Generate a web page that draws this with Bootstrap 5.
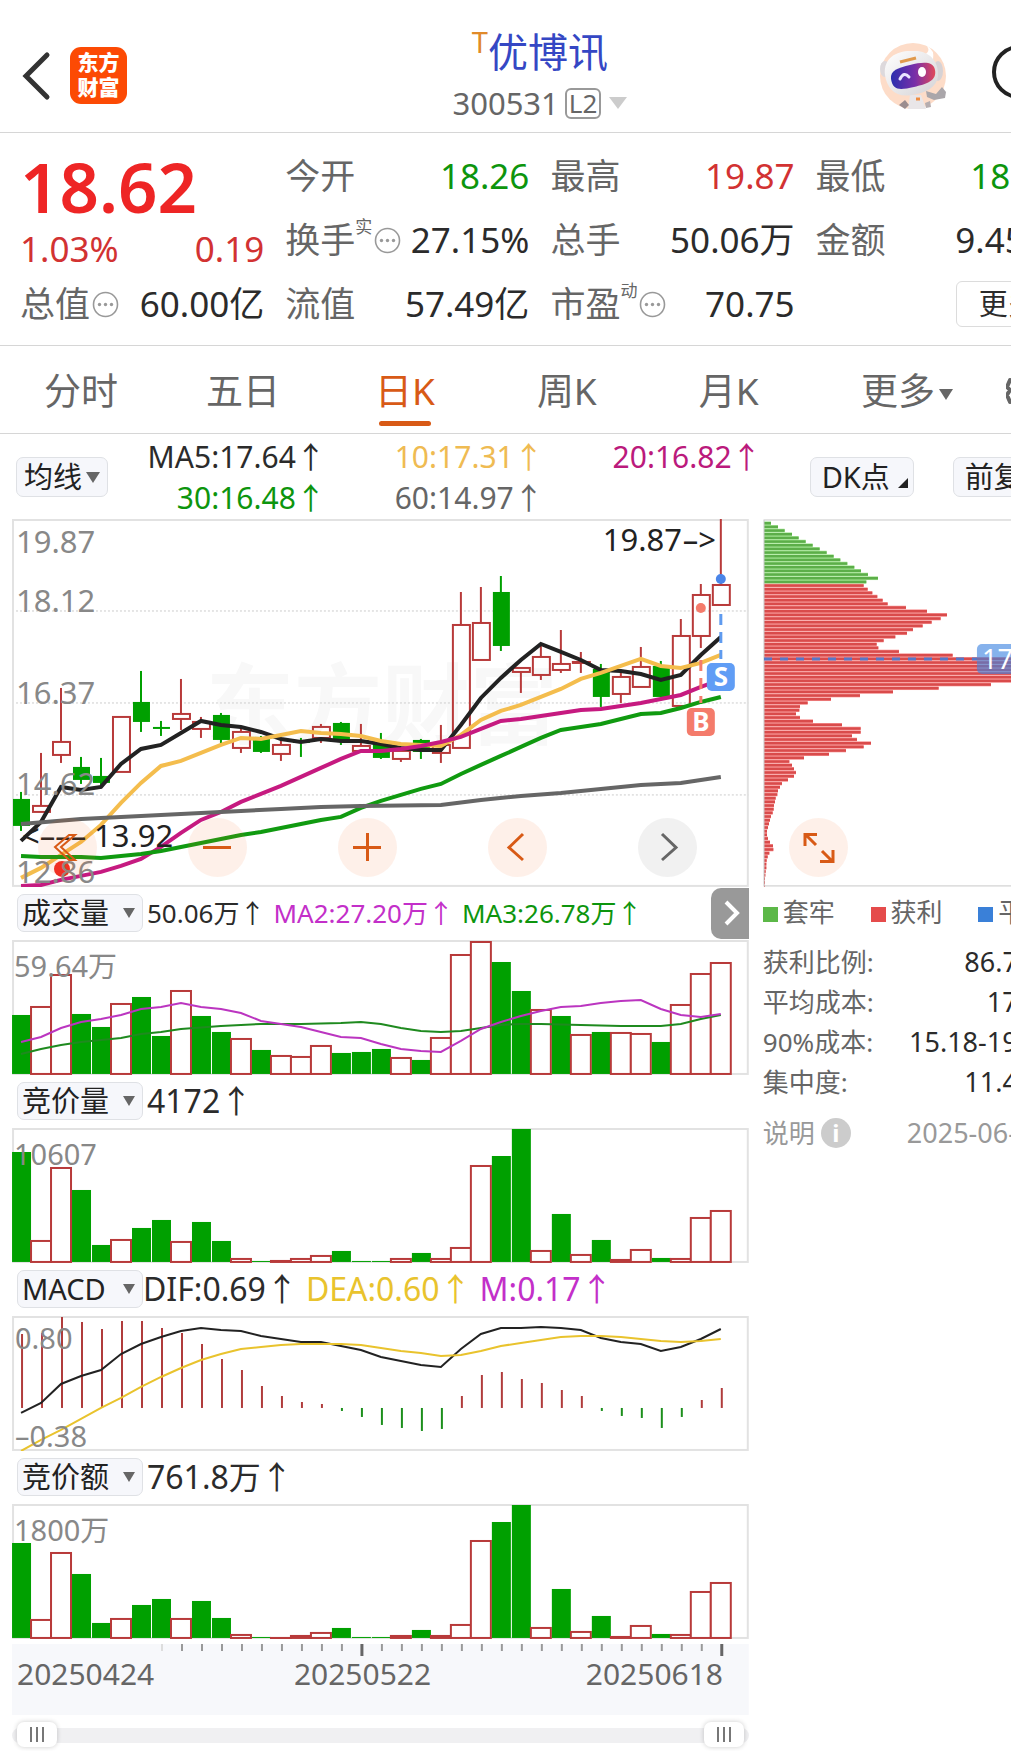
<!DOCTYPE html>
<html lang="zh-CN">
<head>
<meta charset="utf-8">
<meta name="viewport" content="width=device-width, initial-scale=1">
<title>优博讯 300531</title>
<link href="https://cdn.jsdelivr.net/npm/bootstrap@5.3.0/dist/css/bootstrap.min.css" rel="stylesheet">
<style>
body{font-family:"Noto Sans","Noto Sans CJK SC",sans-serif;color:#2b2b2b;background:#fff}
.stock-app{width:calc(107% - 2px)}
.c-red{color:#d23232}.c-green{color:#0d950d}.c-gray{color:#666}
.c-gold{color:#efbb52}.c-mag{color:#bb1a7c}.c-dea{color:#e9c32d}.c-vio{color:#c32fc9}
.line-b{border-bottom:1px solid #d6d6d6}
svg{display:block}
svg text{font-family:"Noto Sans","Noto Sans CJK SC",sans-serif}
/* header */
.top-head{height:133px;padding:0 22px}
.side{flex:1 1 0;height:133px;padding-top:18px}
.robot{margin-right:42px}
.em-logo{width:57px;height:57px;border-radius:11px;background:#fc4a04;color:#fff;font-weight:900;font-size:21px;line-height:25px;padding-top:3px}
.stock-name{font-size:40px;line-height:50px;color:#3547c4;margin:27px 0 5px}
.stock-name sup{font-size:29px;color:#e08a2a;top:-14px;line-height:0}
.stock-code{font-size:31px;line-height:42px;color:#666}
.lv2{border:2px solid #999;border-radius:6px;font-size:26px;line-height:27px;padding:0 2px;margin-left:6px}
.tri{display:inline-block;border:9px solid transparent;border-top:12px solid #ccc;border-bottom:0}
/* quote */
.quote{padding:11px 20px 9px;display:grid;grid-template-columns:repeat(4,1fr);column-gap:21px;font-size:35px}
.q-line{height:64px;display:flex;align-items:center;white-space:nowrap}
.q-line.mid{height:46px}
.q-line>:last-child{margin-left:auto}
.q-line sup{font-size:17px;top:-20px;line-height:0;margin-right:2px}
.big-price{font-size:69px;font-weight:600;line-height:84px;height:82px;color:#ee2525}
.more-btn{font-size:29px;line-height:44px;padding:0 22px;border:1px solid #dcdcdc;border-radius:6px;background:#fff;color:#2b2b2b}
/* period tabs */
.period a{flex:0 0 15%;height:87px;line-height:90px;font-size:37px;color:#666;text-align:center;text-decoration:none;position:relative;white-space:nowrap}
.period a.active{color:#d85a16}
.period a.active::after{content:"";position:absolute;left:50%;margin-left:-26px;bottom:7px;width:52px;height:5px;border-radius:3px;background:#d85a16}
.period a.wide{flex-basis:18%}
.gear-btn{border:0;background:none;padding:0 0 0 2px}
.period .tri,.ma-row .tri{border-width:7px;border-top:11px solid #666;border-bottom:0;vertical-align:5px}
/* MA row */
.ma-row{height:85px;padding:0 16px;white-space:nowrap}
.chip-btn{height:40px;border:1px solid #dfe1e5;border-radius:7px;background:#f6f7fb;font-size:29px;line-height:36px;color:#222;padding:0 7px}
.chip-btn.roomy{padding:0 11px}
.gap-r{margin-right:39px}
.ma-grid{display:grid;grid-template-columns:repeat(3,1fr);text-align:right;font-size:30px;line-height:41px}
.corner{display:inline-block;border-left:10px solid transparent;border-bottom:10px solid #222;margin-left:8px;margin-right:-6px}
/* charts */
.chart-area{display:grid;grid-template-columns:737fr 317fr;column-gap:14px;padding-left:12px}
.chart-area svg{width:100%;height:auto}
.tools{position:absolute;left:26px;bottom:10px;display:flex;gap:91px}
.tool{width:59px;height:59px;border:0;border-radius:50%;background:rgba(250,110,40,.1);padding:0}
.tool.off{background:rgba(80,80,80,.08)}
.chart-area .tool svg{width:59px;height:59px}
.ind-row{height:53px;padding-left:5px;font-size:32px;line-height:40px;white-space:nowrap}
.ind-row.tight{font-size:26px}
.pick{position:relative;width:126px;flex:none}
.pick select{appearance:none;width:100%;height:38px;border:1px solid #dfe1e5;border-radius:7px;background:#f6f7fb;font-size:29px;line-height:36px;padding:0 4px;color:#222;display:block}
.pick::after{content:"";position:absolute;right:8px;top:14px;border:6px solid transparent;border-top:10px solid #666;border-bottom:0}
.slide-btn{height:51px;width:38px;border:0;border-radius:10px 0 0 10px;background:#999;padding:0}
.chart-area .slide-btn svg{width:38px;height:51px}
.zoom-bar{position:relative;height:25px;margin-top:7px;margin-bottom:5px}
.zoom-bar::before{content:"";position:absolute;left:0;right:0;top:6px;height:15px;border-radius:8px;background:#f0f0f2}
.zoom-bar input{position:absolute;left:5px;right:5px;top:0;width:calc(100% - 10px);height:25px;appearance:none;background:none;pointer-events:none;margin:0}
.zoom-bar input::-webkit-slider-thumb{appearance:none;pointer-events:auto;width:40px;height:25px;border:0;border-radius:7px;box-shadow:0 0 5px rgba(0,0,0,.2);background:linear-gradient(90deg,transparent 13px,#777 13px 15px,transparent 15px 19px,#777 19px 21px,transparent 21px 25px,#777 25px 27px,transparent 27px) center/40px 15px no-repeat,#fff}
/* cost panel */
.legend-row{height:52px;font-size:26px;color:#666}
.legend-row i{width:15px;height:15px;display:inline-block;margin-right:5px}
.legend-row span{width:34%;flex:none;white-space:nowrap}
.cost{font-size:26px;line-height:40px;margin:3px 0 0;padding-right:24px;white-space:nowrap}
.cost dt{font-weight:400;color:#666}.cost dd{margin:0;font-size:27px}
.note{font-size:26px;line-height:40px;color:#999;margin-top:11px;padding-right:32px}
.note .ms-auto{font-size:27px}
.info-dot{width:30px;height:30px;border-radius:50%;background:#ccc;color:#fff;font-weight:700;line-height:30px;font-size:24px;text-align:center;margin-left:6px;border:0;padding:0}
</style>
</head>
<body>
<div class="overflow-hidden">
<div class="stock-app">
<header class="top-head line-b d-flex">
  <div class="side d-flex align-items-center">
    <a href="#" aria-label="返回" class="me-3"><svg width="32" height="50" viewBox="0 0 32 50"><path d="M25 4 4 25 25 46" fill="none" stroke="#333" stroke-width="5" stroke-linecap="round"/></svg></a>
    <div class="em-logo text-center">东方<br>财富</div>
  </div>
  <div class="text-center">
    <h1 class="stock-name fw-normal"><sup>T</sup>优博讯</h1>
    <div class="stock-code d-flex align-items-center justify-content-center"><span>300531</span><span class="lv2">L2</span><span class="tri ms-2"></span></div>
  </div>
  <div class="side d-flex align-items-center justify-content-end">
    <svg width="72" height="70" viewBox="0 0 72 70" class="robot">
      <defs><linearGradient id="visor"><stop offset="0" stop-color="#2b2fae"/><stop offset=".55" stop-color="#7a2fa8"/><stop offset="1" stop-color="#e0485a"/></linearGradient>
      <linearGradient id="shell" x1="0" y1="0" x2="1" y2="1"><stop offset="0" stop-color="#fff"/><stop offset="1" stop-color="#d5d3d6"/></linearGradient></defs>
      <circle cx="35" cy="35" r="33" fill="#fddcc8"/>
      <path d="M32 54h11l5 14H30Z" fill="#e9e6e8"/>
      <path d="M48 50 58 53 64 46 68 51 67 57 56 59 49 56Z" fill="#aaa6aa"/>
      <path d="M21 64 27 59 31 64 27 68Z" fill="#9b8d8f"/><path d="M47 62 52 60 53 66 48 67Z" fill="#b5adaf"/>
      <ellipse cx="7" cy="28" rx="5" ry="8" fill="#ddd9dc"/><ellipse cx="60" cy="30" rx="5" ry="10" fill="#d6d2d5"/>
      <path d="M46 14Q53 11 49 5 57 9 55 19Z" fill="#fff"/>
      <path d="M7 34C5 16 20 9 35 10 51 9 61 20 60 35 59 46 48 52 34 54 18 57 9 48 7 34Z" fill="url(#shell)"/>
      <path d="M13 38C12 29 20 27 32 24 45 21 55 20 57 29 59 40 48 43 36 46 22 49 15 50 13 38Z" fill="url(#visor)"/>
      <path d="M22 38q4-8 9-2" fill="none" stroke="#e9e5ff" stroke-width="3" stroke-linecap="round"/><ellipse cx="44" cy="31" rx="4" ry="5" fill="#fff"/>
      <path d="M22 21 38 17" stroke="#e09a4d" stroke-width="3"/><path d="M38 58h4" stroke="#ee8d42" stroke-width="3"/>
    </svg>
    <a href="#" aria-label="搜索"><svg width="66" height="66" viewBox="0 0 66 66"><circle cx="27" cy="29" r="25" fill="none" stroke="#222" stroke-width="4"/><path d="M45 47 59 61" stroke="#222" stroke-width="4"/></svg></a>
  </div>
</header>

<section class="quote line-b">
  <div>
    <div class="big-price">18.62</div>
    <div class="q-line mid c-red"><span>1.03%</span><span>0.19</span></div>
    <div class="q-line"><span class="c-gray">总值</span><svg width="29" height="27" viewBox="-2 0 29 27"><use href="#dots"/></svg><span>60.00亿</span></div>
  </div>
  <div>
    <div class="q-line"><span class="c-gray">今开</span><span class="c-green">18.26</span></div>
    <div class="q-line"><span class="c-gray">换手<sup>实</sup></span><svg width="27" height="27" viewBox="0 0 27 27"><use href="#dots"/></svg><span>27.15%</span></div>
    <div class="q-line"><span class="c-gray">流值</span><span>57.49亿</span></div>
  </div>
  <div>
    <div class="q-line"><span class="c-gray">最高</span><span class="c-red">19.87</span></div>
    <div class="q-line"><span class="c-gray">总手</span><span>50.06万</span></div>
    <div class="q-line"><span class="c-gray">市盈<sup>动</sup></span><svg width="27" height="27" viewBox="0 0 27 27"><use href="#dots"/></svg><span>70.75</span></div>
  </div>
  <div>
    <div class="q-line"><span class="c-gray">最低</span><span class="c-green">18.08</span></div>
    <div class="q-line"><span class="c-gray">金额</span><span>9.45亿</span></div>
    <div class="q-line"><button class="more-btn" type="button">更多</button></div>
  </div>
</section>
<svg width="0" height="0" class="position-absolute"><defs><g id="dots"><circle cx="13.500" cy="13.500" r="12" fill="none" stroke="#999" stroke-width="1.600"/><circle cx="7.500" cy="13.500" r="1.700" fill="#999"/><circle cx="13.500" cy="13.500" r="1.700" fill="#999"/><circle cx="19.500" cy="13.500" r="1.700" fill="#999"/></g></defs></svg>

<nav class="period line-b d-flex">
  <a href="#">分时</a><a href="#">五日</a><a href="#" class="active">日K</a><a href="#">周K</a><a href="#">月K</a><a href="#" class="wide">更多<span class="tri ms-1"></span></a>
  <button class="gear-btn" type="button" aria-label="设置"><svg width="40" height="40" viewBox="0 0 40 40" fill="none" stroke="#666" stroke-width="4" stroke-linejoin="round"><path d="M16 3h8l2 5 5 3 5-1 3 7-3 3 3 5-3 7-5-1-5 3-2 4h-8l-3-4-4-3-5 1-3-7 3-5-3-3 3-7 5 1 4-3Z"/><circle cx="20" cy="20" r="6"/></svg></button>
</nav>

<div class="ma-row d-flex align-items-center">
  <button class="chip-btn" type="button">均线<span class="tri ms-1"></span></button>
  <div class="ma-grid flex-grow-1">
    <span>MA5:17.64↑</span><span class="c-gold">10:17.31↑</span><span class="c-mag">20:16.82↑</span>
    <span class="c-green">30:16.48↑</span><span class="c-gray">60:14.97↑</span>
  </div>
  <button class="chip-btn roomy ms-5 gap-r" type="button">DK点<span class="corner"></span></button>
  <button class="chip-btn roomy" type="button">前复权</button>
</div>

<main class="chart-area">
  <div>
    <div class="position-relative">
      <svg id="kline" viewBox="0 0 737 368" role="img" aria-label="日K线"></svg>
      <div class="tools">
        <button class="tool" type="button" aria-label="最早"><svg viewBox="0 0 59 59" fill="none" stroke="#d85a16" stroke-width="2"><path d="M31 17 17 29 31 42H37L23 29 37 17Z"/></svg></button>
        <button class="tool" type="button" aria-label="缩小"><svg viewBox="0 0 59 59" stroke="#d85a16" stroke-width="3"><path d="M15 29.500H43"/></svg></button>
        <button class="tool" type="button" aria-label="放大"><svg viewBox="0 0 59 59" stroke="#d85a16" stroke-width="3"><path d="M15 29.500H43M29.500 15V43"/></svg></button>
        <button class="tool" type="button" aria-label="左移"><svg viewBox="0 0 59 59" fill="none" stroke="#d85a16" stroke-width="3"><path d="M35 16 21 29.500 35 42"/></svg></button>
        <button class="tool off" type="button" aria-label="右移"><svg viewBox="0 0 59 59" fill="none" stroke="#666" stroke-width="3"><path d="M24 16 38 29.500 24 42"/></svg></button>
      </div>
    </div>
    <div class="ind-row tight d-flex align-items-center">
      <div class="pick"><select aria-label="指标一"><option>成交量</option></select></div>
      <span class="ms-1">50.06万↑</span><span class="ms-2 c-vio">MA2:27.20万↑</span><span class="ms-2 c-green">MA3:26.78万↑</span>
      <button class="slide-btn ms-auto" type="button" aria-label="展开"><svg viewBox="0 0 38 51"><path d="M15 14 26 25 15 36" fill="none" stroke="#fff" stroke-width="4"/></svg></button>
    </div>
    <svg id="vol" viewBox="0 0 737 135" role="img" aria-label="成交量"></svg>
    <div class="ind-row d-flex align-items-center">
      <div class="pick"><select aria-label="指标二"><option>竞价量</option></select></div><span class="ms-1">4172↑</span>
    </div>
    <svg id="auc" viewBox="0 0 737 135" role="img" aria-label="竞价量"></svg>
    <div class="ind-row d-flex align-items-center">
      <div class="pick"><select aria-label="指标三"><option>MACD</option></select></div><span>DIF:0.69↑</span><span class="ms-2 c-dea">DEA:0.60↑</span><span class="ms-2 c-vio">M:0.17↑</span>
    </div>
    <svg id="macd" viewBox="0 0 737 135" role="img" aria-label="MACD"></svg>
    <div class="ind-row d-flex align-items-center">
      <div class="pick"><select aria-label="指标四"><option>竞价额</option></select></div><span class="ms-1">761.8万↑</span>
    </div>
    <svg id="amt" viewBox="0 0 737 135" role="img" aria-label="竞价额"></svg>
    <svg id="axis" viewBox="0 0 737 76" role="img" aria-label="日期"></svg>
    <div class="zoom-bar"><input type="range" aria-label="区间起点" min="0" max="100" value="0"><input type="range" aria-label="区间终点" min="0" max="100" value="100"></div>
  </div>
  <aside>
    <div class="position-relative">
      <svg id="chips" viewBox="0 0 317 368" role="img" aria-label="筹码分布"></svg>
      <div class="tools"><button class="tool" type="button" aria-label="全屏"><svg viewBox="0 0 59 59" fill="none" stroke="#d85a16" stroke-width="3"><path d="M16 28V16.500H28M17 17 27 27M44 32V43.500H31M33 33 43 43"/></svg></button></div>
    </div>
    <div class="legend-row d-flex align-items-center"><span><i style="background:#5cb848"></i>套牢</span><span><i style="background:#e54b4b"></i>获利</span><span><i style="background:#3a80d8"></i>平均成本</span></div>
    <dl class="cost">
      <div class="d-flex justify-content-between"><dt>获利比例:</dt><dd>86.73%</dd></div>
      <div class="d-flex justify-content-between"><dt>平均成本:</dt><dd>17.22</dd></div>
      <div class="d-flex justify-content-between"><dt>90%成本:</dt><dd>15.18-19.08</dd></div>
      <div class="d-flex justify-content-between"><dt>集中度:</dt><dd>11.40%</dd></div>
    </dl>
    <div class="note d-flex align-items-center"><span>说明</span><button class="info-dot" type="button">i</button><span class="ms-auto">2025-06-18</span></div>
  </aside>
</main>
</div>
</div>
<script src="https://cdn.jsdelivr.net/npm/bootstrap@5.3.0/dist/js/bootstrap.bundle.min.js"></script>
<script>
const RED='#b83a3a',GREEN='#00a000',X=i=>9+20*i;
const rect=(x,y,w,h,a)=>`<rect x="${x}" y="${y}" width="${w}" height="${h}" ${a}/>`;
const seg=(x1,y1,x2,y2,c,w,m='')=>`<path d="M${x1} ${y1}L${x2} ${y2}" stroke="${c}" stroke-width="${w}" ${m}/>`;
const txt=(x,y,s,a='fill="#888" font-size="31"')=>`<text x="${x}" y="${y}" ${a}>${s}</text>`;
const poly=(p,o,c,w)=>`<polyline fill="none" stroke="${c}" stroke-width="${w}" points="${p.map((v,i)=>Array.isArray(v)?X(v[0])+','+(v[1]-o):X(i)+','+(v-o)).join(' ')}"/>`;
const frame=h=>rect(1,1,735,h-2,'fill="none" stroke="#e2e2e2" stroke-width="2"');
const put=(id,s)=>document.getElementById(id).innerHTML=s;
const dirs='GRRGGRGGRRGRGRGRGRGRGRRRGRRRRGRRGRRR';
// [high, body top, body bottom, low]
const K=[[792,799,826,831],[753,806,812,812],[688,742,755,763],[757,767,780,784],[758,776,783,788],[717,717,772,772],[671,702,722,732],[721,727,728,736],[679,714,719,730],[717,722,729,738],[713,715,740,744],[727,732,748,753],[736,737,752,753],[740,745,754,761],[738,741,742,757],[724,727,738,743],[722,723,742,745],[724,746,751,751],[733,743,758,759],[748,751,759,762],[739,740,752,759],[725,745,753,763],[592,625,748,748],[587,623,660,660],[576,592,646,651],[668,668,672,693],[644,657,675,680],[630,664,670,673],[652,662,663,673],[664,669,697,707],[672,677,694,703],[647,667,687,687],[661,666,697,697],[619,636,706,706],[584,595,636,648],[519,585,605,605]];
let s=txt(194,218,'东方财富','fill="#f8f8f8" font-size="88" font-weight="700"');
[92,184,276].forEach(y=>s+=seg(0,y,737,y,'#ccc',1,'stroke-dasharray="2 2"'));
s+=frame(368);
K.forEach((k,i)=>{const[h,a,b,l]=k.map(v=>v-519),x=X(i);
  if(dirs[i]==='G')s+=seg(x,h,x,l,GREEN,2)+rect(x-8,a,17,Math.max(b-a,2),`fill="${GREEN}"`);
  else s+=seg(x,h,x,a,RED,2)+seg(x,b,x,l,RED,2)+rect(x-8,a,17,b-a,`fill="none" stroke="${RED}" stroke-width="2"`);});
s+=`<circle cx="50" cy="350" r="8" fill="#f02a22"/>`;
s+=poly([841,822,787,790,787,764,749,745,733,721,725,727,732,739,742,739,741,741,744,748,750,750,725,698,678,660,644,652,660,670,671,674,680,675,655,637],519,'#222',4);
s+=poly([878,868,855,842,825,803,783,766,761,753,745,738,739,735,731,733,734,736,741,744,745,746,735,720,711,705,697,689,679,673,666,659,666,668,663,655],519,'#f4bd4d',4);
s+=poly([886,885,880,876,872,866,859,847,833,820,812,802,794,786,777,768,759,751,751,749,746,742,737,729,721,719,716,713,710,709,706,703,699,695,687,680],519,'#c61a80',4);
s+=poly([856,857,857,857,858,856,854,851,847,843,839,835,832,828,824,820,817,808,801,795,789,784,774,765,756,747,738,730,727,724,719,714,713,708,702,697],519,'#109a10',4);
s+=poly([[0,824],[3,819],[7,815],[11,811],[13,809],[15,807],[17,806],[21,805],[23,800],[25,796],[27,793],[29,789],[31,785],[33,783],[35,777]],519,'#666',4);
[['19.87',34],['18.12',93],['16.37',185],['14.62',276],['12.86',364]].forEach(t=>s+=txt(4,t[1],t[0]));
const ink='fill="#222" font-size="31"';
s+=txt(591,32,'19.87',ink)+txt(671,32,'–&gt;',ink)+txt(10,328,'&lt;–––',ink)+txt(82,328,'13.92',ink);
s+=seg(709,95,709,140,'#5f9bef',3,'stroke-dasharray="11 7"')+seg(689,141,689,184,'#f47b6b',3,'stroke-dasharray="11 7"');
s+=`<circle cx="709" cy="60" r="5" fill="#4a85e8"/><circle cx="689" cy="89" r="5" fill="#f47b6b"/>`;
const tag='fill="#fff" font-size="26" font-weight="700" text-anchor="middle"';
s+=rect(695,144,28,28,'rx="5" fill="#609df5"')+txt(709,167,'S',tag)+rect(675,189,28,28,'rx="5" fill="#f47b6b"')+txt(689,212,'B',tag);
put('kline',s);
const vd='GRRGGRGGRGGRGRRRGGGRGRRRGGRGRGRRGRRR';
function bars(t,o,base){return t.map((v,i)=>{const x=X(i),y=v-o,h=base-v;
  return vd[i]==='G'?rect(x-9,y,19,h,`fill="${GREEN}"`):rect(x-10,y+1,20,Math.max(h-1,1),`fill="#fff" stroke="${RED}" stroke-width="2"`)}).join('');}
put('vol',frame(135)+bars([1014,1005,973,1013,1026,1002,996,1035,989,1015,1031,1037,1049,1054,1055,1044,1052,1051,1048,1056,1059,1036,953,940,961,990,1008,1015,1033,1031,1031,1032,1041,1003,972,961],939,1073)
+poly([[0,1053],[1,1048],[2,1044],[3,1041],[5,1037],[6,1033],[7,1031],[8,1028],[10,1025],[12,1023],[14,1023],[16,1022],[17,1021],[18,1023],[19,1027],[20,1030],[21,1031],[22,1030],[23,1027],[24,1024],[25,1023],[26,1023],[28,1024],[30,1025],[32,1025],[33,1023],[34,1018],[35,1014]],939,'#1f8a1f',2)
+poly([1041,1036,1027,1021,1018,1014,1008,1006,1002,1006,1008,1012,1020,1023,1026,1031,1036,1037,1043,1048,1050,1051,1040,1028,1021,1015,1010,1006,1005,1002,1000,999,1008,1014,1016,1013],939,'#bb35c0',2)+txt(2,37,'59.64万','fill="#888" font-size="29"'));
put('auc',frame(135)+bars([1151,1239,1166,1189,1244,1238,1227,1219,1240,1221,1240,1257,1260,1259,1257,1254,1250,1260,1260,1257,1252,1257,1246,1164,1155,1128,1249,1213,1253,1239,1258,1248,1257,1257,1216,1209],1127,1261)+txt(2,37,'10607','fill="#888" font-size="29"'));
put('amt',frame(135)+bars([1542,1618,1551,1573,1622,1617,1604,1598,1617,1600,1617,1633,1636,1636,1634,1631,1627,1636,1636,1634,1629,1634,1623,1539,1521,1504,1626,1588,1630,1615,1635,1624,1633,1633,1590,1581],1503,1637)+txt(2,37,'1800万','fill="#888" font-size="29"'));
s=frame(135);
[1333,1332,1316,1321,1328,1320,1320,1327,1332,1343,1358,1369,1385,1395,1401,1403,1410,1416,1424,1427,1430,1428,1395,1374,1371,1378,1382,1389,1395,1410,1415,1417,1427,1416,1399,1387].forEach((v,i)=>s+=seg(X(i)+1,92,X(i)+1,v-1315,v<1407?'#b03c3c':'#1c8f1c',2));
s+=poly([1412,1402,1383,1375,1369,1353,1343,1336,1330,1327,1329,1330,1335,1338,1341,1341,1345,1349,1356,1360,1364,1366,1348,1333,1327,1327,1326,1327,1329,1337,1341,1343,1350,1346,1338,1328],1315,'#222',2);
s+=poly([1450,1439,1429,1418,1407,1397,1386,1376,1367,1359,1353,1348,1346,1344,1343,1343,1343,1344,1347,1350,1352,1355,1354,1350,1345,1342,1339,1336,1335,1335,1336,1338,1340,1341,1340,1338],1315,'#e9c32d',2);
put('macd',s+txt(3,33,'0.80','fill="#888" font-size="29"')+txt(3,131,'–0.38','fill="#888" font-size="29"'));
s=rect(0,5,737,71,'fill="#f7f8fb"');
for(let i=7;i<36;i++){const m=i===17||i===35;s+=seg(X(i)+1,5,X(i)+1,m?17:12,m?'#666':(i<8?'#ddd':'#999'),m?3:2);}
put('axis',s+txt(5,46,'20250424','fill="#666" font-size="30"')+txt(282,46,'20250522','fill="#666" font-size="30"')+txt(574,46,'20250618','fill="#666" font-size="30"'));
// cost distribution, one bar per price step
const W=[21,42,62,84,104,125,146,167,188,209,229,250,271,291,312,342,307,299,311,325,340,356,371,426,489,549,530,503,476,447,429,394,359,338,343,405,566,780,860,900,930,900,860,800,681,524,387,288,201,131,108,106,96,108,147,234,290,290,264,279,321,299,246,195,120,76,84,90,96,90,72,54,48,42,40,35,33,30,29,26,21,18,15,12,9,9,12,18,27,28,16,11,8,7,7,5,4,3,3,2];
s='';
W.forEach((w,i)=>{const y=3+i*11/3,g=i<17;s+=rect(1,y-.6,w/3,3.67,`fill="${g?'#a5e695':'#f99a9a'}"`)+rect(1,y,w/3,2.5,`fill="${g?'#5cae49':'#d94b4b'}"`);});
s+=rect(1,1,330,366,'fill="none" stroke="#c8c8c8"')+seg(1,140,214,140,'#5577c8',3,'stroke-dasharray="8 8"');
s+=rect(214,125,110,30,'rx="5" fill="#3b82e0" fill-opacity=".62"')+txt(219,150,'17.22','fill="#fff" font-size="27"');
put('chips',s);
</script>
</body>
</html>
